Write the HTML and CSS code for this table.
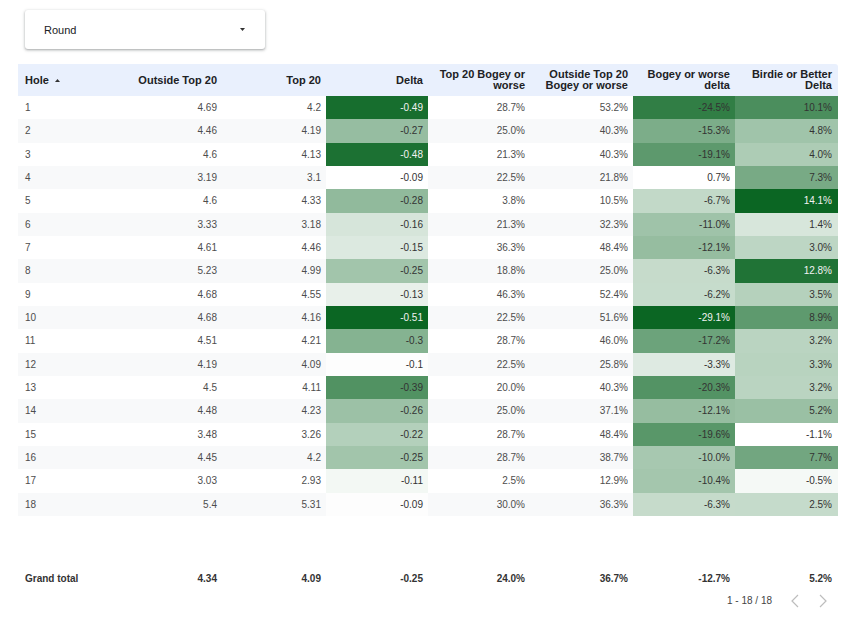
FILE: index.html
```html
<!DOCTYPE html>
<html>
<head>
<meta charset="utf-8">
<link rel="stylesheet" href="styles.css">
</head>
<body>
<div class="page">
  <div class="dropdown">
    <span class="dd-label">Round</span>
    <svg class="dd-arrow" width="5" height="3" viewBox="0 0 5 3"><path d="M0 0h5L2.5 3z" fill="#333"/></svg>
  </div>

  <table class="grid">
    <colgroup>
      <col class="c-hole"><col class="c-102"><col class="c-104"><col class="c-102"><col class="c-102"><col class="c-103"><col class="c-102"><col class="c-103">
    </colgroup>
    <thead>
      <tr>
        <th class="left">Hole <svg class="sort" width="5" height="3" viewBox="0 0 5 3"><path d="M0 3L2.5 0L5 3z" fill="#333"/></svg></th>
        <th>Outside Top 20</th>
        <th>Top 20</th>
        <th>Delta</th>
        <th>Top 20 Bogey or worse</th>
        <th>Outside Top 20 Bogey or worse</th>
        <th>Bogey or worse delta</th>
        <th class="last">Birdie or Better Delta</th>
      </tr>
    </thead>
    <tbody>
      <tr><td class="left">1</td><td>4.69</td><td>4.2</td><td class="heat dk" style="--i:95%">-0.49</td><td>28.7%</td><td>53.2%</td><td class="heat" style="--i:84.6%">-24.5%</td><td class="heat" style="--i:73.7%">10.1%</td></tr>
      <tr><td class="left">2</td><td>4.46</td><td>4.19</td><td class="heat" style="--i:42.9%">-0.27</td><td>25.0%</td><td>40.3%</td><td class="heat" style="--i:53.7%">-15.3%</td><td class="heat" style="--i:38.8%">4.8%</td></tr>
      <tr><td class="left">3</td><td>4.6</td><td>4.13</td><td class="heat dk" style="--i:92.9%">-0.48</td><td>21.3%</td><td>40.3%</td><td class="heat" style="--i:66.4%">-19.1%</td><td class="heat" style="--i:33.6%">4.0%</td></tr>
      <tr><td class="left">4</td><td>3.19</td><td>3.1</td><td class="heat" style="--i:0%">-0.09</td><td>22.5%</td><td>21.8%</td><td class="heat" style="--i:0%">0.7%</td><td class="heat" style="--i:55.3%">7.3%</td></tr>
      <tr><td class="left">5</td><td>4.6</td><td>4.33</td><td class="heat" style="--i:45.2%">-0.28</td><td>3.8%</td><td>10.5%</td><td class="heat" style="--i:24.8%">-6.7%</td><td class="heat dk" style="--i:100%">14.1%</td></tr>
      <tr><td class="left">6</td><td>3.33</td><td>3.18</td><td class="heat" style="--i:16.7%">-0.16</td><td>21.3%</td><td>32.3%</td><td class="heat" style="--i:39.3%">-11.0%</td><td class="heat" style="--i:16.4%">1.4%</td></tr>
      <tr><td class="left">7</td><td>4.61</td><td>4.46</td><td class="heat" style="--i:14.3%">-0.15</td><td>36.3%</td><td>48.4%</td><td class="heat" style="--i:43%">-12.1%</td><td class="heat" style="--i:27%">3.0%</td></tr>
      <tr><td class="left">8</td><td>5.23</td><td>4.99</td><td class="heat" style="--i:38.1%">-0.25</td><td>18.8%</td><td>25.0%</td><td class="heat" style="--i:23.5%">-6.3%</td><td class="heat dk" style="--i:91.4%">12.8%</td></tr>
      <tr><td class="left">9</td><td>4.68</td><td>4.55</td><td class="heat" style="--i:9.5%">-0.13</td><td>46.3%</td><td>52.4%</td><td class="heat" style="--i:23.2%">-6.2%</td><td class="heat" style="--i:30.3%">3.5%</td></tr>
      <tr><td class="left">10</td><td>4.68</td><td>4.16</td><td class="heat dk" style="--i:100%">-0.51</td><td>22.5%</td><td>51.6%</td><td class="heat dk" style="--i:100%">-29.1%</td><td class="heat" style="--i:65.8%">8.9%</td></tr>
      <tr><td class="left">11</td><td>4.51</td><td>4.21</td><td class="heat" style="--i:50%">-0.3</td><td>28.7%</td><td>46.0%</td><td class="heat" style="--i:60.1%">-17.2%</td><td class="heat" style="--i:28.3%">3.2%</td></tr>
      <tr><td class="left">12</td><td>4.19</td><td>4.09</td><td class="heat" style="--i:1%">-0.1</td><td>22.5%</td><td>25.8%</td><td class="heat" style="--i:13.4%">-3.3%</td><td class="heat" style="--i:28.9%">3.3%</td></tr>
      <tr><td class="left">13</td><td>4.5</td><td>4.11</td><td class="heat" style="--i:71.4%">-0.39</td><td>20.0%</td><td>40.3%</td><td class="heat" style="--i:70.5%">-20.3%</td><td class="heat" style="--i:28.3%">3.2%</td></tr>
      <tr><td class="left">14</td><td>4.48</td><td>4.23</td><td class="heat" style="--i:40.5%">-0.26</td><td>25.0%</td><td>37.1%</td><td class="heat" style="--i:43%">-12.1%</td><td class="heat" style="--i:41.4%">5.2%</td></tr>
      <tr><td class="left">15</td><td>3.48</td><td>3.26</td><td class="heat" style="--i:31%">-0.22</td><td>28.7%</td><td>48.4%</td><td class="heat" style="--i:68.1%">-19.6%</td><td class="heat" style="--i:0%">-1.1%</td></tr>
      <tr><td class="left">16</td><td>4.45</td><td>4.2</td><td class="heat" style="--i:38.1%">-0.25</td><td>28.7%</td><td>38.7%</td><td class="heat" style="--i:35.9%">-10.0%</td><td class="heat" style="--i:57.9%">7.7%</td></tr>
      <tr><td class="left">17</td><td>3.03</td><td>2.93</td><td class="heat" style="--i:4.8%">-0.11</td><td>2.5%</td><td>12.9%</td><td class="heat" style="--i:37.2%">-10.4%</td><td class="heat" style="--i:3.9%">-0.5%</td></tr>
      <tr><td class="left">18</td><td>5.4</td><td>5.31</td><td class="heat" style="--i:1%">-0.09</td><td>30.0%</td><td>36.3%</td><td class="heat" style="--i:23.5%">-6.3%</td><td class="heat" style="--i:23.7%">2.5%</td></tr>
    </tbody>
    <tfoot>
      <tr class="total"><td class="left">Grand total</td><td>4.34</td><td>4.09</td><td>-0.25</td><td>24.0%</td><td>36.7%</td><td>-12.7%</td><td>5.2%</td></tr>
    </tfoot>
  </table>

  <div class="pager">
    <span class="range">1 - 18 / 18</span>
    <svg class="chev" width="10" height="14" viewBox="0 0 10 14"><path d="M8 1L2 7l6 6" fill="none" stroke="#bdbdbd" stroke-width="1.2"/></svg>
    <svg class="chev" width="10" height="14" viewBox="0 0 10 14"><path d="M2 1l6 6-6 6" fill="none" stroke="#bdbdbd" stroke-width="1.2"/></svg>
  </div>
</div>
</body>
</html>
```

FILE: styles.css
```css
html, body {
  margin: 0;
  padding: 0;
  background: #ffffff;
}

body {
  font-family: "Liberation Sans", Arial, sans-serif;
  color: #4d4d4d;
}

.page {
  width: 868px;
  height: 626px;
  padding-top: 10px;
  box-sizing: border-box;
}

.dropdown {
  margin-left: 25px;
  width: 240px;
  height: 39px;
  box-sizing: border-box;
  background: #fff;
  border-radius: 3px;
  box-shadow: 0 1px 2px rgba(60, 64, 67, 0.3), 0 1px 3px 1px rgba(60, 64, 67, 0.15);
  display: flex;
  align-items: center;
  justify-content: space-between;
  padding: 0 20px 0 19px;
}

.dd-label {
  font-size: 11px;
  color: #202124;
}

.dd-arrow {
  display: block;
}

.grid {
  margin-top: 15px;
  margin-left: 18px;
  width: 820px;
  table-layout: fixed;
  border-collapse: collapse;
  border-spacing: 0;
}

.c-hole, .c-102 { width: 102px; }
.c-104 { width: 104px; }
.c-103 { width: 103px; }

.grid th {
  height: 32px;
  padding: 0 5px;
  background: #e9f0fd;
  font-size: 11px;
  line-height: 11px;
  font-weight: bold;
  color: #202124;
  text-align: right;
  vertical-align: middle;
}

.grid th.left {
  text-align: left;
  padding-left: 7px;
}

.grid th.last {
  border-top-right-radius: 3px;
  padding-right: 6px;
}

.sort {
  margin-left: 3px;
  vertical-align: 2px;
}

.grid tbody td {
  height: 22.33px;
  padding: 1px 5px 0 5px;
  font-size: 10px;
  line-height: 12px;
  text-align: right;
  vertical-align: middle;
  color: #4d4d4d;
}

.grid tbody tr:nth-child(even) td {
  background: #f8f9fa;
}

.grid td.left {
  text-align: left;
  padding-left: 7px;
}

.grid tbody tr td.heat,
.grid tbody tr:nth-child(even) td.heat {
  background: color-mix(in srgb, #0b6623 var(--i), #ffffff);
  color: #333;
}

.grid tbody tr td.heat.dk,
.grid tbody tr:nth-child(even) td.heat.dk {
  color: #f2f2f2;
}

.grid tbody td:last-child {
  padding-right: 6px;
}

.total td {
  padding: 57px 5px 5px 5px;
  font-size: 10px;
  line-height: 12px;
  font-weight: bold;
  color: #333;
  text-align: right;
}

.total td.left {
  padding-left: 7px;
  text-align: left;
}

.total td:last-child {
  padding-right: 6px;
}

.pager {
  margin-top: 4px;
  width: 838px;
  display: flex;
  justify-content: flex-end;
  align-items: center;
}

.range {
  font-size: 10px;
  color: #444;
  margin-right: 18px;
}

.chev {
  display: block;
  margin-right: 18px;
}

.chev:last-child {
  margin-right: 10px;
}
```
